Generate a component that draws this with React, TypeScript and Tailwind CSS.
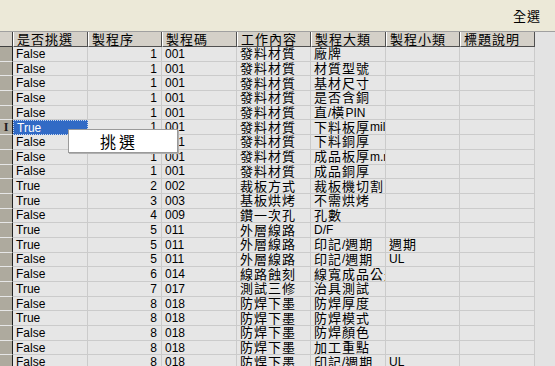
import React from 'react';

type Row = [string, string, string, string, string, string];

const rows: Row[] = [
  ['False', '1', '001', '發料材質', '廠牌', ''],
  ['False', '1', '001', '發料材質', '材質型號', ''],
  ['False', '1', '001', '發料材質', '基材尺寸', ''],
  ['False', '1', '001', '發料材質', '是否含銅', ''],
  ['False', '1', '001', '發料材質', '直/橫 PIN', ''],
  ['True', '1', '001', '發料材質', '下料板厚mil', ''],
  ['False', '1', '001', '發料材質', '下料銅厚', ''],
  ['False', '1', '001', '發料材質', '成品板厚m.m', ''],
  ['False', '1', '001', '發料材質', '成品銅厚', ''],
  ['True', '2', '002', '裁板方式', '裁板機切割', ''],
  ['True', '3', '003', '基板烘烤', '不需烘烤', ''],
  ['False', '4', '009', '鑽一次孔', '孔數', ''],
  ['True', '5', '011', '外層線路', 'D/F', ''],
  ['True', '5', '011', '外層線路', '印記/週期', '週期'],
  ['False', '5', '011', '外層線路', '印記/週期', 'UL'],
  ['False', '6', '014', '線路蝕刻', '線寬成品公差', ''],
  ['True', '7', '017', '測試三修', '治具測試', ''],
  ['False', '8', '018', '防焊下墨', '防焊厚度', ''],
  ['True', '8', '018', '防焊下墨', '防焊模式', ''],
  ['False', '8', '018', '防焊下墨', '防焊顏色', ''],
  ['False', '8', '018', '防焊下墨', '加工重點', ''],
  ['False', '8', '018', '防焊下墨', '印記/週期', 'UL'],
];

const headers = ['是否挑選', '製程序', '製程碼', '工作內容', '製程大類', '製程小類', '標題說明'];
const widths = ['w-[75px]', 'w-[74px]', 'w-[75px]', 'w-[74px]', 'w-[75px]', 'w-[74px]', 'w-[75px]'];

const CJK = /([\u2E80-\u9FFF\uF900-\uFAFF\uFF00-\uFFEF]+)/;

// latin and CJK runs need different sizes to match the old grid font
const Txt: React.FC<{ s: string }> = ({ s }) => (
  <>
    {s
      .split(CJK)
      .filter(Boolean)
      .map((p, i) =>
        CJK.test(p) ? (
          <span key={i} className="text-[13px] tracking-[1px]">{p}</span>
        ) : (
          <span key={i} className="text-[12px]">{p}</span>
        )
      )}
  </>
);

const App: React.FC = () => {
  return (
    <div className="w-[555px] h-[366px] overflow-hidden relative flex flex-col bg-[#ece9d8] text-black font-['Liberation_Sans','Noto_Sans_CJK_TC',sans-serif] leading-none">
      {/* Toolbar */}
      <div className="h-[31px] shrink-0 flex items-center justify-end pr-[14px] pt-[1px]">
        <span className="text-[13px] tracking-[1px]">全選</span>
      </div>

      {/* Grid */}
      <div className="flex-1 flex flex-col bg-[#e3e3e3] border-t border-[#a0a0a0]">
        <div className="flex h-[15px] shrink-0">
          <div className="w-[13px] shrink-0 bg-[#d4d0c8] border-r border-b border-[#404040]" />
          {headers.map((h, i) => (
            <div
              key={h}
              className={`${widths[i]} shrink-0 bg-[#d4d0c8] border-r border-b border-[#505050] border-l border-l-white flex items-center pl-[3px] overflow-hidden whitespace-nowrap`}
            >
              <Txt s={h} />
            </div>
          ))}
          <div className="flex-1" />
        </div>

        {rows.map((r, ri) => {
          const sel = ri === 5;
          return (
            <div key={ri} className="flex h-[14.7px] shrink-0">
              <div className="w-[13px] shrink-0 bg-[#aeaa9e] border-b border-b-[#e6e6e6] border-r border-r-[#202020] flex items-center justify-center">
                {sel && <span className="font-['Liberation_Serif',serif] font-bold text-[12px] text-[#202020]">I</span>}
              </div>
              <div
                className={`${widths[0]} shrink-0 flex items-center pl-[3px] overflow-hidden whitespace-nowrap ${
                  sel ? 'bg-[#316ac5] text-white border border-dotted border-[#c8d8f0]' : 'bg-[#e6e6e6] border-r border-b border-[#cbcbcb]'
                }`}
              >
                <Txt s={r[0]} />
              </div>
              <div className={`${widths[1]} shrink-0 bg-[#e6e6e6] border-r border-b border-[#cbcbcb] flex items-center justify-end pr-[4px]`}>
                <Txt s={r[1]} />
              </div>
              {r.slice(2).map((c, ci) => (
                <div
                  key={ci}
                  className={`${widths[ci + 2]} shrink-0 bg-[#e6e6e6] border-r border-b border-[#cbcbcb] flex items-center pl-[3px] overflow-hidden whitespace-nowrap`}
                >
                  <Txt s={c} />
                </div>
              ))}
              <div className={`${widths[6]} shrink-0 bg-[#e6e6e6] border-r border-b border-[#cbcbcb]`} />
              <div className="flex-1" />
            </div>
          );
        })}
      </div>

      {/* Context menu */}
      <div className="absolute left-[68px] top-[129px] w-[110px] h-[24px] bg-white border border-[#9a9a9a] shadow-[1px_1px_0_#b0b0b0] flex items-center pl-[31px]">
        <span className="text-[16px] tracking-[3px] font-['Noto_Sans_CJK_TC',sans-serif]">挑選</span>
      </div>
    </div>
  );
};

export default App;
